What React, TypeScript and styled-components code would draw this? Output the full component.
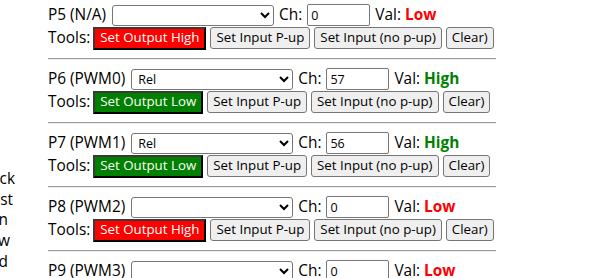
import styled, { createGlobalStyle } from 'styled-components';

const GlobalStyle = createGlobalStyle`
  body {
    margin: 0;
    background: #fff;
    color: #000;
    font-family: 'Open Sans', 'Noto Sans', sans-serif;
    font-size: 15.4px;
  }
`;

const Page = styled.div`
  display: flex;
  align-items: flex-start;
`;

const NotePanel = styled.div`
  width: 48px;
  flex-shrink: 0;
  padding-top: 169px;
  display: flex;
  flex-direction: column;
  line-height: 20.7px;
`;

const NoteLine = styled.div<{ $end: number }>`
  width: ${(p) => p.$end}px;
  display: flex;
  justify-content: flex-end;
  overflow: hidden;
  white-space: nowrap;
`;

const PinList = styled.div`
  width: 448px;
  padding-top: 4px;
  display: flex;
  flex-direction: column;
`;

const PinBlock = styled.div`
  display: flex;
  flex-direction: column;
`;

const Line = styled.div`
  display: flex;
  align-items: center;
  gap: 5px;
  height: 22px;
  white-space: nowrap;
`;

const ToolLine = styled(Line)`
  gap: 4px;
  height: 24px;
`;

const Label = styled.span`
  line-height: 22px;
`;

const ToolsLabel = styled(Label)`
  margin-right: -1px;
`;

const PinSelect = styled.select`
  width: 162px;
  height: 21px;
  margin-left: 1px;
  box-sizing: border-box;
  border: 1px solid #767676;
  border-radius: 3px;
  background: #fff;
  font-family: 'Open Sans', sans-serif;
  font-size: 12.5px;
  padding: 0 2px;
  color: #000;
`;

const ChInput = styled.input`
  width: 63px;
  height: 22px;
  box-sizing: border-box;
  border: 1px solid #767676;
  border-radius: 2px;
  padding: 1px 3px;
  font-family: 'Open Sans', sans-serif;
  font-size: 12.5px;
  color: #000;
`;

const Value = styled.b<{ $high: boolean }>`
  color: ${(p) => (p.$high ? '#008000' : '#ff0000')};
  font-weight: 700;
`;

const ToolButton = styled.button<{ $tone?: 'red' | 'green' }>`
  height: 22px;
  box-sizing: border-box;
  padding: 0 5px;
  font-family: 'Open Sans', sans-serif;
  font-size: 13.3px;
  line-height: 1;
  cursor: pointer;
  ${(p) =>
    p.$tone
      ? `
    background: ${p.$tone === 'red' ? '#ff0000' : '#008000'};
    color: #fff;
    border-style: solid;
    border-width: 2px;
    border-color: #3a3a3a #000 #000 #3a3a3a;
    border-radius: 0;
    height: 23px;
  `
      : `
    background: #efefef;
    color: #000;
    border: 1px solid #767676;
    border-radius: 3px;
  `}
`;

const Separator = styled.hr`
  margin: 8px 0;
  height: 0;
  border: none;
  border-top: 1px solid #9a9a9a;
  border-bottom: 1px solid #eeeeee;
`;

type Pin = {
  name: string;
  mode: string;
  ch: string;
  high: boolean;
};

const pins: Pin[] = [
  { name: 'P5 (N/A)', mode: '', ch: '0', high: false },
  { name: 'P6 (PWM0)', mode: 'Rel', ch: '57', high: true },
  { name: 'P7 (PWM1)', mode: 'Rel', ch: '56', high: true },
  { name: 'P8 (PWM2)', mode: '', ch: '0', high: false },
  { name: 'P9 (PWM3)', mode: '', ch: '0', high: false },
];

const notes = [
  { text: 'Click', end: 15 },
  { text: 'the list', end: 13 },
  { text: 'then', end: 8 },
  { text: 'below', end: 10 },
  { text: 'and', end: 8 },
];

function PinRow({ pin }: { pin: Pin }) {
  return (
    <PinBlock>
      <Line>
        <Label>{pin.name}</Label>
        <PinSelect defaultValue={pin.mode}>
          <option value=""></option>
          <option value="Rel">Rel</option>
          <option value="Btn">Btn</option>
          <option value="PWM">PWM</option>
        </PinSelect>
        <Label>Ch:</Label>
        <ChInput defaultValue={pin.ch} />
        <Label>
          Val: <Value $high={pin.high}>{pin.high ? 'High' : 'Low'}</Value>
        </Label>
      </Line>
      <ToolLine>
        <ToolsLabel>Tools:</ToolsLabel>
        <ToolButton $tone={pin.high ? 'green' : 'red'}>
          {pin.high ? 'Set Output Low' : 'Set Output High'}
        </ToolButton>
        <ToolButton>Set Input P-up</ToolButton>
        <ToolButton>Set Input (no p-up)</ToolButton>
        <ToolButton>Clear)</ToolButton>
      </ToolLine>
      <Separator />
    </PinBlock>
  );
}

export default function App() {
  return (
    <Page>
      <GlobalStyle />
      <NotePanel>
        {notes.map((n) => (
          <NoteLine key={n.text} $end={n.end}>
            {n.text}
          </NoteLine>
        ))}
      </NotePanel>
      <PinList>
        {pins.map((p) => (
          <PinRow key={p.name} pin={p} />
        ))}
      </PinList>
    </Page>
  );
}
